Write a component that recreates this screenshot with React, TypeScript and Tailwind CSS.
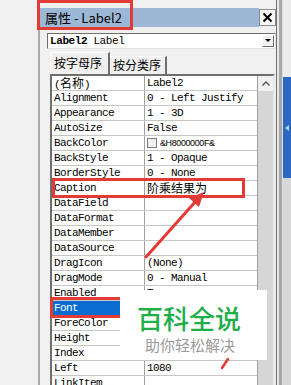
import React from 'react';

const Cjk = ({ children }: { children: React.ReactNode }) => (
  <span className="font-['Noto_Sans_CJK_SC',sans-serif] text-[12px] tracking-normal">{children}</span>
);

type Row = { name: React.ReactNode; value?: React.ReactNode; selected?: boolean };

const rows: Row[] = [
  { name: <>(<Cjk>名称</Cjk>)</>, value: 'Label2' },
  { name: 'Alignment', value: '0 - Left Justify' },
  { name: 'Appearance', value: '1 - 3D' },
  { name: 'AutoSize', value: 'False' },
  {
    name: 'BackColor',
    value: (
      <span className="flex items-center h-full">
        <span className="w-[10px] h-[10px] border border-[#7a7a7a] bg-[#f0f0f0] shrink-0" />
        <span className="ml-[3px] font-['Liberation_Sans',sans-serif] text-[9px] tracking-[-0.4px]">&amp;H8000000F&amp;</span>
      </span>
    ),
  },
  { name: 'BackStyle', value: '1 - Opaque' },
  { name: 'BorderStyle', value: '0 - None' },
  { name: 'Caption', value: <Cjk>阶乘结果为</Cjk> },
  { name: 'DataField' },
  { name: 'DataFormat' },
  { name: 'DataMember' },
  { name: 'DataSource' },
  { name: 'DragIcon', value: '(None)' },
  { name: 'DragMode', value: '0 - Manual' },
  { name: 'Enabled', value: 'True' },
  { name: 'Font', selected: true },
  { name: 'ForeColor' },
  { name: 'Height' },
  { name: 'Index' },
  { name: 'Left', value: '1080' },
  { name: 'LinkItem' },
  { name: 'LinkMode' },
];

export default function App() {
  return (
    <div className="relative w-[291px] h-[385px] overflow-hidden bg-[#f0f0f0] flex">
      {/* left gutter */}
      <div className="w-[38px] shrink-0 bg-[#f0f0f0]" />

      {/* properties window */}
      <div className="w-[239px] shrink-0 flex flex-col border-l-2 border-l-[#a9a9a9] border-r border-r-[#707070] bg-[#f0f0f0]">
        <div className="h-[8px] shrink-0" />
        {/* title bar */}
        <div className="h-[19px] shrink-0 flex items-center">
          <div className="flex-1 h-full bg-[#9db8d6] flex items-center pl-[5px] font-['Noto_Sans_CJK_SC',sans-serif] text-[13px] leading-[19px] text-black">
            属性 - Label2
          </div>
          <div className="w-[17px] h-[17px] shrink-0 border border-[#8a8a8a] bg-[#f6f6f6] flex items-center justify-center">
            <svg width="11" height="11" viewBox="0 0 11 11">
              <path d="M1.5 1.5 L9.5 9.5 M9.5 1.5 L1.5 9.5" stroke="#000" strokeWidth="2" />
            </svg>
          </div>
        </div>
        <div className="h-[6px] shrink-0" />
        {/* combo box */}
        <div className="h-[16px] shrink-0 pl-[7px]">
          <div className="h-full bg-white border border-[#6e6e6e] border-b-[#e3e3e3] border-r-[#e3e3e3] flex items-center">
            <div className="flex-1 pl-[2px] font-['Liberation_Mono',monospace] text-[11px] tracking-[-0.4px] leading-[14px] text-black whitespace-pre">
              <span className="font-bold">Label2</span> Label
            </div>
            <div className="w-[12px] h-[12px] mr-[1px] bg-[#f0f0f0] border border-white border-b-[#6e6e6e] border-r-[#6e6e6e] flex items-center justify-center">
              <svg width="6" height="4" viewBox="0 0 6 4">
                <path d="M0 0 L6 0 L3 3 Z" fill="#000" />
              </svg>
            </div>
          </div>
        </div>
        <div className="h-[3px] shrink-0" />
        {/* tabs */}
        <div className="h-[22px] shrink-0 pl-[10px] flex items-end font-['Noto_Sans_CJK_SC',sans-serif] text-[12px] text-black">
          <div className="w-[60px] h-full border-l border-t border-white border-r-2 border-r-[#6e6e6e] pl-[3px] pt-[1px] leading-[18px] bg-[#f0f0f0]">
            按字母序
          </div>
          <div className="w-[57px] h-[18px] border-t border-white border-r-2 border-r-[#6e6e6e] pl-[3px] leading-[16px]">
            按分类序
          </div>
        </div>
        {/* grid */}
        <div className="ml-[10px] w-[225px] flex-1 flex border-t-2 border-l-2 border-[#6f6f6f] border-r-2 border-r-[#e8e8e8] bg-white overflow-hidden">
          <div className="w-[206px] border-r border-[#a0a0a0] flex flex-col font-['Liberation_Mono','Noto_Sans_CJK_SC',monospace] text-[11px] tracking-[-0.6px] leading-[14px] text-black">
            {rows.map((r, i) => (
              <div key={i} className="h-[15px] shrink-0 flex border-b border-[#c6c6c6]">
                <div
                  className={
                    'w-[93px] shrink-0 pl-[2px] border-r border-[#a0a0a0] whitespace-nowrap ' +
                    (r.selected ? 'bg-[#0a6cd0] text-white' : '')
                  }
                >
                  {r.name}
                </div>
                <div className="flex-1 pl-[2px] whitespace-pre">{r.value}</div>
              </div>
            ))}
          </div>
          {/* scrollbar */}
          <div className="w-[15px] flex flex-col">
            <div className="h-[15px] bg-[#f0f0f0] flex items-center justify-center">
              <svg width="8" height="5" viewBox="0 0 8 5">
                <path d="M0.5 4.5 L4 1 L7.5 4.5" stroke="#555" strokeWidth="1.4" fill="none" />
              </svg>
            </div>
            <div className="flex-1 bg-[#d6d6d6]" />
          </div>
        </div>
      </div>

      {/* right strip */}
      <div className="flex-1 flex">
        <div className="w-[2px] bg-[#e8e8e8]" />
        <div className="w-[3px] bg-[#a8a8a8]" />
        <div className="w-[1px] bg-[#e0e0e0]" />
        <div className="flex-1 flex flex-col">
          <div className="h-[77px] bg-[#ececec]" />
          <div className="h-[101px] bg-[#2d67c4] flex items-center justify-center">
            <svg width="4" height="6" viewBox="0 0 4 6">
              <path d="M4 0 L0 3 L4 6 Z" fill="#bcd4f4" />
            </svg>
          </div>
          <div className="flex-1 bg-[#d8d8d8]" />
        </div>
      </div>

      {/* annotations */}
      <div className="absolute left-[37px] top-0 w-[96px] h-[30px] border-[3px] border-[#e23b36]" />
      <div className="absolute left-[52px] top-[178px] w-[193px] h-[20px] border-[3px] border-[#e23b36]" />
      <div className="absolute left-[50px] top-[297px] w-[120px] h-[21px] border-[3px] border-[#e23b36]" />
      <svg className="absolute left-0 top-0 pointer-events-none" width="291" height="385" viewBox="0 0 291 385">
        <line x1="146" y1="257" x2="196" y2="201" stroke="#e23b36" strokeWidth="3" strokeLinecap="round" />
        <polygon points="204,192 199,207 189,198" fill="#e23b36" />
      </svg>

      {/* watermark */}
      <div className="absolute left-[120px] top-[290px] w-[147px] h-[70px] bg-white flex flex-col">
        <div className="mt-[15px] ml-[17px] font-['Noto_Sans_CJK_SC',sans-serif] font-medium text-[26px] leading-[26px] text-[#1fae48]">
          百科全说
        </div>
        <div className="mt-[6px] ml-[25px] font-['Noto_Sans_CJK_SC',sans-serif] text-[15px] leading-[16px] text-[#9a9a9a]">
          助你轻松解决
        </div>
      </div>
      <svg className="absolute left-0 top-0 pointer-events-none" width="291" height="385" viewBox="0 0 291 385">
        <line x1="228" y1="359" x2="222" y2="368" stroke="#e23b36" strokeWidth="2.5" strokeLinecap="round" />
      </svg>
    </div>
  );
}
